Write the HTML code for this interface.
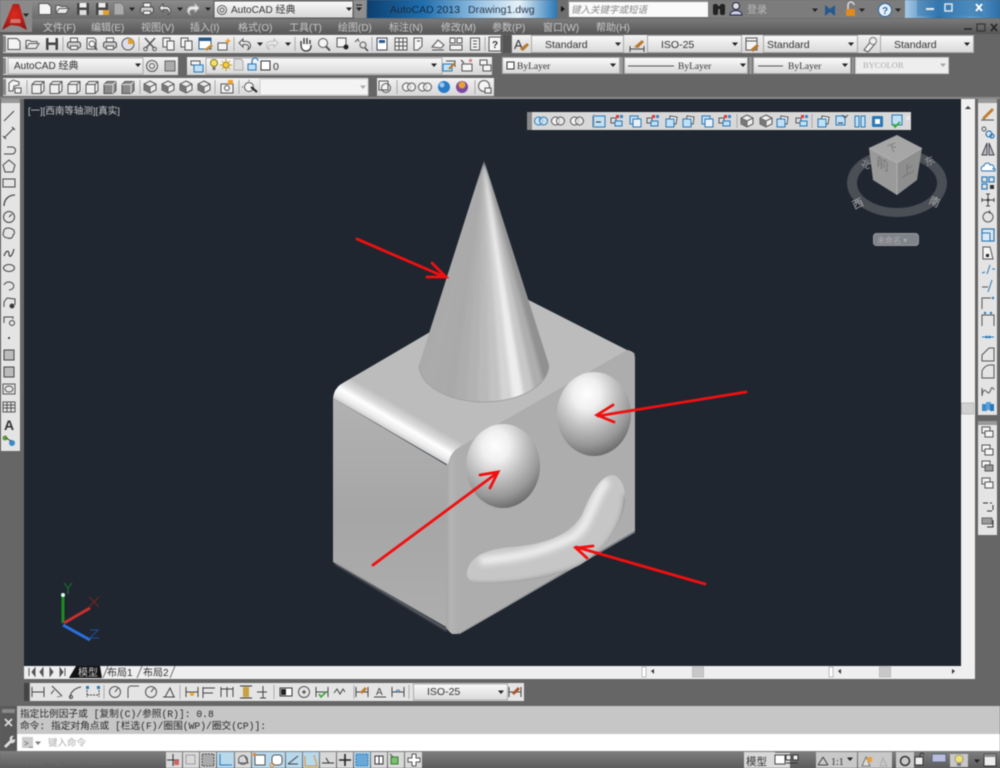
<!DOCTYPE html>
<html><head><meta charset="utf-8"><title>AutoCAD 2013</title>
<style>
html,body{margin:0;padding:0;background:#666;width:1000px;height:768px;overflow:hidden}
svg{display:block;filter:blur(.5px)}
text{font-family:"Liberation Sans","Noto Sans CJK SC",sans-serif}
.m{font-size:10px;fill:#c9c9c9}
.c{font-size:10px;fill:#333}
.mono{font-family:"Liberation Mono","Noto Sans CJK SC",monospace;font-size:9.7px;fill:#2a2a2a}
.ser{font-family:"Liberation Serif","Noto Serif CJK SC",serif;font-size:9.5px;fill:#333}
.i{fill:none;stroke:#555;stroke-width:1}
.w{fill:#f4f4f4;stroke:#555;stroke-width:1}
.b{fill:#bfe0f5;stroke:#2a78b5;stroke-width:1}
.o{fill:#f0a030;stroke:#b06a10;stroke-width:.6}
.bl{fill:none;stroke:#2a78b5;stroke-width:1.2}
</style></head><body>
<svg width="1000" height="768" viewBox="0 0 1000 768" xmlns="http://www.w3.org/2000/svg">
<defs>
<linearGradient id="tb" x1="0" y1="0" x2="0" y2="1"><stop offset="0" stop-color="#f2f2f2"/><stop offset="1" stop-color="#d6d6d6"/></linearGradient>
<linearGradient id="mn" x1="0" y1="0" x2="0" y2="1"><stop offset="0" stop-color="#7a7a7a"/><stop offset="1" stop-color="#565656"/></linearGradient>
<linearGradient id="tt" x1="0" y1="0" x2="0" y2="1"><stop offset="0" stop-color="#8c8c8c"/><stop offset="1" stop-color="#6c6c6c"/></linearGradient>
<linearGradient id="st" x1="0" y1="0" x2="0" y2="1"><stop offset="0" stop-color="#808080"/><stop offset="1" stop-color="#5c5c5c"/></linearGradient>
<linearGradient id="cb" x1="0" y1="0" x2="0" y2="1"><stop offset="0" stop-color="#fafafa"/><stop offset="1" stop-color="#d8d8d8"/></linearGradient>
<linearGradient id="blu" x1="0" y1="0" x2="1" y2="0"><stop offset="0" stop-color="#0d3f6e"/><stop offset=".3" stop-color="#1f6fb0"/><stop offset=".6" stop-color="#9cc6e6"/><stop offset=".8" stop-color="#e6f1f9"/><stop offset="1" stop-color="#2a78b5"/></linearGradient>
<linearGradient id="blu2" x1="0" y1="0" x2="1" y2="0"><stop offset="0" stop-color="#a8cbe6"/><stop offset=".35" stop-color="#2a70ad"/><stop offset=".7" stop-color="#5d9ccb"/><stop offset="1" stop-color="#2c6fa8"/></linearGradient>
<radialGradient id="logo" cx=".5" cy=".4" r=".7"><stop offset="0" stop-color="#e02a20"/><stop offset="1" stop-color="#8a1712"/></radialGradient>
<linearGradient id="leftF" x1="0" y1="0" x2="0" y2="1"><stop offset="0" stop-color="#b2b2b2"/><stop offset=".5" stop-color="#a6a6a6"/><stop offset="1" stop-color="#aeaeae"/></linearGradient>
<linearGradient id="band" gradientUnits="userSpaceOnUse" x1="397.6" y1="405" x2="382.4" y2="431"><stop offset="0" stop-color="#bcbcbc"/><stop offset=".3" stop-color="#dcdcdc"/><stop offset=".5" stop-color="#fff"/><stop offset=".72" stop-color="#ececec"/><stop offset="1" stop-color="#b2b2b2"/></linearGradient>
<linearGradient id="vedge" gradientUnits="userSpaceOnUse" x1="446" y1="0" x2="458" y2="0"><stop offset="0" stop-color="#a6a6a6"/><stop offset=".4" stop-color="#b4b4b4"/><stop offset="1" stop-color="#adadad"/></linearGradient>
<radialGradient id="sph" cx=".4" cy=".26" r=".84"><stop offset="0" stop-color="#fff"/><stop offset=".22" stop-color="#f0f0f0"/><stop offset=".48" stop-color="#c0c0c0"/><stop offset=".72" stop-color="#989898"/><stop offset=".9" stop-color="#6c6c6c"/><stop offset="1" stop-color="#505050"/></radialGradient>
<clipPath id="coneC"><path d="M484 160L419 365A65 37 0 0 0 549 365Z"/></clipPath>
<clipPath id="smC"><path d="M467 572C470 556 485 550 510 547C545 545 570 535 582 515C590 495 600 476 612 475C622 476 626 490 625 502C622 525 605 550 580 565C555 578 510 585 480 583C470 582 466 578 467 572Z"/></clipPath>
<filter id="bl3"><feGaussianBlur stdDeviation="2.5"/></filter>
<filter id="bl1"><feGaussianBlur stdDeviation="1"/></filter>
<filter id="bl15" x="-20%" y="-5%" width="140%" height="110%"><feGaussianBlur stdDeviation="1.6"/></filter>
<filter id="bls" x="-20%" y="-20%" width="140%" height="140%"><feGaussianBlur stdDeviation="3"/></filter>

<path id="tri" d="M-3-1.5h6L0 2z" fill="#222"/>
<g id="doc"><path class="w" d="M-6-5.5h9l3 3v8h-12z"/></g>
<g id="open"><path class="w" d="M-7 4.5v-8h4l1 1h6v2"/><path d="M-7 4.5l3-5h10l-3 5z" fill="#e8e8e8" stroke="#555"/></g>
<g id="save"><rect x="-6" y="-6" width="12" height="12" rx="1" fill="#444"/><rect x="-3.5" y="-6" width="7" height="4.5" fill="#eee"/><rect x="-3.5" y="1" width="7" height="5" fill="#ddd"/></g>
<g id="print"><rect x="-3.5" y="-6" width="7" height="4" class="w"/><rect x="-6.5" y="-2" width="13" height="6" rx="2" fill="#ccc" stroke="#444"/><rect x="-3.5" y="2" width="7" height="3.5" class="w"/></g>
<g id="prev"><path class="w" d="M-5-6h7l2 2v9h-9z"/><circle cx="0" cy="0" r="3" class="i"/><path d="M2 2l3 4" stroke="#444" stroke-width="1.4"/></g>
<g id="cut"><path d="M-5-6L4 4M5-6L-4 4" stroke="#555" stroke-width="1.5"/><circle cx="-4.5" cy="5" r="1.8" class="i"/><circle cx="4.5" cy="5" r="1.8" class="i"/></g>
<g id="copy"><path class="w" d="M-6-6h7v9h-7z"/><path class="w" d="M-2-3h7v9h-7z"/></g>
<g id="zoom"><circle cx="-1" cy="-1" r="4.5" class="w"/><path d="M2 2.5l4 4" stroke="#444" stroke-width="1.8"/></g>
<g id="box"><path d="M-6-2.5l3-3h9v9l-3 3h-9z" fill="#eee" stroke="#555"/><path d="M-6-2.5h9v9M3-2.5l3-3" class="i"/></g>
<g id="boxd"><path d="M-6-2.5l3-3h9v9l-3 3h-9z" fill="#8a8a8a" stroke="#555"/><path d="M-6-2.5h9v9M3-2.5l3-3" fill="none" stroke="#ddd"/></g>
<g id="iso"><path d="M0-6l6 3v6l-6 3-6-3v-6z" fill="#eee" stroke="#555"/><path d="M-6-3l6 3 6-3M0 0v6" class="i"/><path d="M-6-3l6 3v6l-6-3z" fill="#777"/></g>
<g id="undo"><path d="M-6-1l4-4v2.5h3c5 0 6 6 2 8 1.5-3 0-5-2-5h-3v2.5z" fill="#eee" stroke="#555"/></g>
<g id="redo"><path d="M6-1L2-5v2.5h-3c-5 0-6 6-2 8-1.5-3 0-5 2-5h3v2.5z" fill="#eee" stroke="#bbb"/></g>
<g id="circ2"><circle cx="-2.5" cy="0" r="4" class="w"/><circle cx="2.5" cy="0" r="4" class="w" fill-opacity=".6"/></g>
<g id="cblue"><circle cx="-2.5" cy="0" r="4" fill="#cde3f4" stroke="#2a78b5"/><circle cx="2.5" cy="0" r="4" fill="#cde3f4" fill-opacity=".6" stroke="#2a78b5"/><path d="M-1 0a3 3 0 0 1 0-3" stroke="#2a78b5" fill="none"/></g>
<g id="fb"><rect x="-6" y="-5" width="9" height="9" class="b"/><path d="M-4 2h5" stroke="#333"/><path d="M0-6l3 3 3-3" stroke="#555" fill="none"/></g>
<g id="fc"><path d="M-6-3h5v5h-5z" fill="#ddd" stroke="#555"/><path d="M-2 0h7v5h-7z" class="b"/><rect x="-1" y="-6" width="3" height="3" fill="#d33"/><rect x="3" y="-6" width="3" height="3" fill="#38c"/></g>
<g id="fd"><path d="M-5-5h8v8h-8z" class="b"/><path d="M-2-2h8v8h-8z" fill="#e8f2fa" stroke="#2a78b5"/></g>
<g id="fe"><path d="M-2-5l7 1-1 7-7-1z" class="w"/><path d="M-6-2h8v8h-8z" class="b"/></g>
<g id="dl"><path d="M-6-5v10M6-5v10M-6 0H6" stroke="#444" fill="none"/></g>
<g id="dm"><path d="M-5-6l3 3M-2-3l7 7" stroke="#444" fill="none"/><path d="M-6 2l3-4" stroke="#444"/><path d="M0 5l5-1" stroke="#888"/></g>
<g id="dc"><circle cx="0" cy="0" r="5.5" class="i"/><path d="M0 0l3-4" stroke="#444"/></g>
<g id="rc"><path d="M-5 6V-3a3 3 0 0 1 3-3h8" class="i" stroke-width="1.2"/></g>
</defs>

<!-- window bg -->
<rect width="1000" height="768" fill="#666"/>

<!-- title bar -->
<rect width="1000" height="19" fill="url(#tt)"/>
<rect x="0" y="19" width="1000" height="15" fill="url(#mn)"/>
<rect x="367" y="0" width="190" height="18" fill="url(#blu)"/>
<rect x="905" y="0" width="95" height="18" fill="url(#blu2)"/>
<rect x="0" y="0" width="32" height="32" fill="#8a8a8a"/>
<path d="M2 30L13 4h6l8 26-8-4-8-1z" fill="url(#logo)"/>
<path d="M11 19h9l1 4h-11z" fill="#e8c8c0" fill-opacity=".5"/>
<use href="#tri" x="26" y="15" />
<g transform="translate(45 9)"><use href="#doc"/></g>
<g transform="translate(63 9)"><use href="#open"/></g>
<g transform="translate(83 9)"><use href="#save"/></g>
<g transform="translate(102 9)"><use href="#save"/><rect x="1" y="1" width="6" height="5" fill="#e0a030"/></g>
<g transform="translate(120 9)"><path d="M-6-6h7l3 3v9h-10z" fill="#aaa" stroke="#777"/></g>
<use href="#tri" x="132" y="9"/>
<g transform="translate(147 9)"><use href="#print"/></g>
<g transform="translate(165 9)"><use href="#undo"/></g>
<use href="#tri" x="180" y="9"/>
<g transform="translate(193 9)"><use href="#redo"/></g>
<use href="#tri" x="208" y="9"/>
<rect x="214" y="1" width="139" height="17" fill="url(#cb)" stroke="#555"/>
<g transform="translate(222 10)"><circle r="4.5" fill="none" stroke="#555"/><circle r="2" fill="none" stroke="#555"/></g>
<text x="231" y="13" class="c" style="font-size:10px">AutoCAD 经典</text>
<use href="#tri" x="349" y="9"/>
<rect x="354" y="1" width="12" height="17" fill="#8e8e8e"/>
<path d="M356 5h6" stroke="#222"/><use href="#tri" x="359" y="9"/>
<text x="390" y="13" style="font-size:10.5px;fill:#1a2a3a">AutoCAD 2013</text>
<text x="468" y="13" style="font-size:10.5px;fill:#2a3a4a">Drawing1.dwg</text>
<rect x="557" y="0" width="11" height="18" fill="#6e6e6e"/>
<path d="M561 6l4 3-4 3z" fill="#111"/>
<rect x="569" y="2" width="139" height="15" fill="#fafafa"/>
<text x="571" y="13" style="font-size:9.5px;font-style:italic;fill:#888">键入关键字或短语</text>
<rect x="708" y="0" width="197" height="18" fill="#7c7c7c"/>
<g fill="#222"><rect x="713" y="4" width="5" height="11" rx="2"/><rect x="720" y="4" width="5" height="11" rx="2"/><rect x="717" y="6" width="4" height="3"/></g>
<circle cx="736" cy="6" r="3.5" fill="#ddd" stroke="#224"/><path d="M730 15c0-6 12-6 12 0z" fill="#ccd" stroke="#224"/>
<text x="747" y="13" style="font-size:10px;fill:#bbb">登录</text>
<use href="#tri" x="815" y="10"/>
<path d="M825 5l5 4 5-4v11l-5-4-5 4z" fill="#24598f"/>
<rect x="846" y="9" width="9" height="7" fill="#e08a20"/><path d="M848 9V5a3 3 0 0 1 6 0" fill="none" stroke="#ddd" stroke-width="1.5"/>
<use href="#tri" x="862" y="10"/>
<circle cx="885" cy="10" r="6.5" fill="#e8f0f8" stroke="#2a68a8"/><text x="882" y="14" style="font-size:10px;font-weight:bold;fill:#2a68a8">?</text>
<use href="#tri" x="898" y="10"/>
<rect x="917" y="0" width="66" height="16" fill="#3d7bb0" opacity=".55"/>
<rect x="926" y="8" width="8" height="2" fill="#eee"/>
<rect x="945" y="4" width="7" height="7" fill="none" stroke="#eee" stroke-width="1.4"/>
<path d="M976 4l6 7m0-7l-6 7" stroke="#fff" stroke-width="2"/>

<!-- menu -->
<g class="m">
<text class="m" x="43" y="31">文件(F)</text><text class="m" x="91" y="31">编辑(E)</text><text class="m" x="141" y="31">视图(V)</text><text class="m" x="190" y="31">插入(I)</text><text class="m" x="238" y="31">格式(O)</text><text class="m" x="289" y="31">工具(T)</text><text class="m" x="338" y="31">绘图(D)</text><text class="m" x="389" y="31">标注(N)</text><text class="m" x="441" y="31">修改(M)</text><text class="m" x="492" y="31">参数(P)</text><text class="m" x="543" y="31">窗口(W)</text><text class="m" x="596" y="31">帮助(H)</text>
</g>
<rect x="964" y="28" width="8" height="2" fill="#333"/><rect x="977" y="24" width="8" height="7" fill="none" stroke="#333" stroke-width="1.2"/><path d="M991 24l6 7m0-7l-6 7" stroke="#222" stroke-width="1.6"/>

<!-- row 1 -->
<rect x="3" y="35" width="498" height="18" fill="url(#tb)"/>
<rect x="512" y="35" width="462" height="18" fill="url(#tb)"/>
<rect x="3" y="36" width="3" height="16" fill="#888"/>
<g transform="translate(0 44)">
<use href="#doc" x="14"/><use href="#open" x="33"/><use href="#save" x="52"/>
<use href="#print" x="74"/><use href="#prev" x="92"/><use href="#print" x="110"/>
<g transform="translate(128 0)"><circle r="6" fill="#dde" stroke="#555"/><path d="M0 0V-6A6 6 0 0 1 6 0z" fill="#e0a030"/></g>
<use href="#cut" x="150"/><use href="#copy" x="169"/><use href="#copy" x="187"/>
<g transform="translate(205 0)"><rect x="-6" y="-6" width="12" height="11" fill="#fff" stroke="#2a5a8a"/><rect x="-6" y="-6" width="12" height="3" fill="#2a5a8a"/><path d="M0 5l6-5 2 2-6 5z" fill="#c88a30"/></g>
<g transform="translate(224 0)"><rect x="-6" y="-1" width="9" height="7" class="w"/><path d="M4-6l1 2 2 1-2 1-1 2-1-2-2-1 2-1z" fill="#f0a030"/></g>
<use href="#undo" x="245"/><use href="#tri" x="260"/><use href="#redo" x="272"/><use href="#tri" x="288"/>
<g transform="translate(306 0)"><path d="M-5 1V-3M-2 0V-6M1 0V-6M4 0V-4M-5 0c0 6 3 7 5 7 4 0 5-3 5-6" fill="#fff" stroke="#333" stroke-width="1.3"/></g>
<use href="#zoom" x="324"/>
<g transform="translate(343 0)"><rect x="-6" y="-6" width="9" height="9" class="w"/><circle cx="3" cy="3" r="2.5" fill="#222"/></g>
<g transform="translate(361 0)"><circle cx="2" cy="1" r="3" class="i"/><path d="M-6-2l3-3 1 3" class="i"/><path d="M4 4l3 3" stroke="#444" stroke-width="1.5"/></g>
<g transform="translate(382 0)"><rect x="-5" y="-6" width="10" height="12" fill="#fff" stroke="#445"/><rect x="-3" y="-4" width="6" height="3" fill="#2a5a8a"/></g>
<g transform="translate(401 0)"><rect x="-6" y="-6" width="12" height="12" class="w"/><path d="M-6-2H6M-6 2H6M-2-6V6M2-6V6" class="i"/></g>
<g transform="translate(418 0)"><path d="M-4-6h8v8l-4 4h-4z" class="w"/><path d="M-1-3h3" stroke="#555"/></g>
<g transform="translate(438 0)"><path d="M-6 3l6-7 6 5-3 3z" class="w"/><path d="M-6 6H6" stroke="#555"/></g>
<g transform="translate(456 0)"><rect x="-6" y="-6" width="5" height="5" class="w"/><rect x="1" y="-6" width="5" height="5" class="w"/><rect x="-6" y="1" width="12" height="5" class="w"/></g>
<g transform="translate(475 0)"><rect x="-4.5" y="-6" width="9" height="12" class="w"/><path d="M-2-3h4M-2 0h4M-2 3h4" class="i"/></g>
<rect x="489" y="-7" width="12" height="14" fill="#f4f4f4" stroke="#555"/><text x="492" y="4" style="font-size:10px;font-weight:bold;fill:#333">?</text>
</g>
<g stroke="#a8a8a8"><path d="M63 37v14M139 37v14M234 37v14M295 37v14M372 37v14M485 37v14"/></g>
<rect x="503" y="35" width="8" height="18" fill="#555"/>
<g transform="translate(521 44)"><text x="-7" y="5" style="font-size:13px;fill:#333">A</text><path d="M-1 5l7-6 2 2-6 6z" fill="#b8762a"/></g>
<g transform="translate(637 44)"><path d="M-7 5h14M-7 2v6M7 2v6" stroke="#444" fill="none"/><path d="M-3 3l8-7 2 2-6 6z" fill="#b8762a"/></g>
<g transform="translate(752 44)"><rect x="-6" y="-6" width="11" height="12" class="w"/><path d="M-6-3H5" stroke="#555"/><path d="M-1 5l6-5 2 2-6 6z" fill="#b8762a"/></g>
<g transform="translate(870 44)"><path d="M-6 6l7-9 4 3-7 8z" class="w"/><circle cx="3" cy="-3" r="3.5" fill="#eee" stroke="#777"/></g>
<g fill="url(#cb)" stroke="#a8a8a8"><rect x="531.500" y="35.500" width="92" height="17"/><rect x="647.500" y="35.500" width="94" height="17"/><rect x="763.500" y="35.500" width="94" height="17"/><rect x="880.500" y="35.500" width="93" height="17"/></g>
<g style="font-size:10.500px;fill:#333"><text x="545" y="48" style="font-size:10.500px;fill:#333">Standard</text><text x="661" y="48" style="font-size:10.500px;fill:#333">ISO-25</text><text x="767" y="48" style="font-size:10.500px;fill:#333">Standard</text><text x="894" y="48" style="font-size:10.500px;fill:#333">Standard</text></g>
<use href="#tri" x="618" y="44"/><use href="#tri" x="735" y="44"/><use href="#tri" x="851" y="44"/><use href="#tri" x="967" y="44"/>

<!-- row 2 -->
<rect x="3" y="57" width="175" height="18" fill="url(#tb)"/>
<rect x="187" y="57" width="305" height="18" fill="url(#tb)"/>
<rect x="3" y="58" width="3" height="16" fill="#888"/>
<rect x="8" y="58" width="135" height="16" fill="url(#cb)" stroke="#aaa"/>
<text x="14" y="69" style="font-size:10px;fill:#333">AutoCAD 经典</text>
<use href="#tri" x="138" y="65"/>
<g transform="translate(152 66)"><circle r="5.500" class="i"/><circle r="2.500" class="i"/></g>
<g transform="translate(170 66)"><rect x="-5" y="-5" width="10" height="10" fill="#aaa" stroke="#666"/></g>
<g transform="translate(197 66)"><rect x="-6" y="-5" width="9" height="4" class="w"/><rect x="-3" y="-1" width="9" height="7" class="b"/></g>
<rect x="206" y="58" width="236" height="16" fill="url(#cb)" stroke="#aaa"/>
<g transform="translate(214 65)"><circle cy="-2" r="3.500" fill="#f4e070" stroke="#8a7a20"/><rect x="-1.500" y="2" width="3" height="3" fill="#777"/></g>
<g transform="translate(226 65)"><circle r="3" fill="#f4d040" stroke="#a07a10"/><path d="M-6 0h2M4 0h2M0-6v2M0 4v2M-4-4l1 1M3 3l1 1M4-4l-1 1M-3 3l-1 1" stroke="#c09020"/></g>
<g transform="translate(238 65)"><path d="M-4-6h7l2 2v9h-9z" fill="#ddd" stroke="#aaa"/></g>
<g transform="translate(253 65)"><rect x="-5" y="-1" width="8" height="6" class="b"/><path d="M-1-1v-3a3 3 0 0 1 6 0" class="bl"/></g>
<rect x="261" y="61" width="9" height="9" fill="#fff" stroke="#333"/>
<text x="273" y="70" style="font-size:10.500px;fill:#333">0</text>
<use href="#tri" x="434" y="65"/>
<g transform="translate(449 66)"><rect x="-6" y="-2" width="9" height="7" class="b"/><path d="M-3-5h9v6" stroke="#555" fill="none"/><path d="M0 3l6-6" stroke="#b8762a" stroke-width="2"/></g>
<g transform="translate(467 66)"><rect x="-5" y="-2" width="10" height="7" class="w"/><path d="M-6-6l3 3" stroke="#333"/><rect x="2" y="-7" width="3" height="3" fill="#d88"/></g>
<g transform="translate(485 66)"><rect x="-5" y="-6" width="7" height="5" class="w"/><rect x="-2" y="-1" width="8" height="6" class="w"/></g>

<g fill="url(#cb)" stroke="#aaa"><rect x="502.500" y="57.500" width="117" height="16"/><rect x="624.500" y="57.500" width="123" height="16"/><rect x="753.500" y="57.500" width="97" height="16"/></g>
<rect x="855.500" y="57.500" width="93" height="16" fill="#eee" stroke="#ccc"/>
<g fill="#999"><rect x="620" y="57" width="3" height="17"/><rect x="749" y="57" width="3" height="17"/><rect x="852" y="57" width="2" height="17"/></g>
<rect x="507" y="62" width="7" height="7" fill="#fff" stroke="#333"/>
<text x="517" y="69" class="ser">ByLayer</text>
<path d="M628 66h46M758 66h25" stroke="#555"/>
<text x="678" y="69" class="ser">ByLayer</text><text x="788" y="69" class="ser">ByLayer</text>
<text x="863" y="68" class="ser" style="fill:#aaa;font-size:8.500px">BYCOLOR</text>
<use href="#tri" x="613" y="65"/><use href="#tri" x="743" y="65"/><use href="#tri" x="845" y="65"/><use href="#tri" x="943" y="65" style="opacity:.35"/>

<!-- row 3 -->
<rect x="3" y="78" width="365" height="18" fill="url(#tb)"/>
<rect x="377" y="78" width="117" height="18" fill="url(#tb)"/>
<rect x="3" y="79" width="3" height="16" fill="#888"/>
<g transform="translate(0 87)">
<g transform="translate(15 0)"><path d="M-6-4l4-3 6 2v3l-5 1-1 5h-4z" class="w"/><rect x="0" y="1" width="6" height="5" class="w"/></g>
<use href="#box" x="38"/><use href="#box" x="56"/><use href="#box" x="74"/><use href="#box" x="92"/><use href="#boxd" x="110"/><use href="#boxd" x="128"/>
<use href="#iso" x="150"/><use href="#iso" x="168"/><use href="#iso" x="186"/><use href="#iso" x="204"/>
<g transform="translate(227 0)"><rect x="-6" y="-3" width="12" height="9" class="w"/><circle cy="1" r="2.500" class="i"/><rect x="1" y="-7" width="5" height="4" fill="#f0a030"/></g>
<g transform="translate(250 0)"><circle cx="-1" r="4.500" class="w"/><path d="M-1-6v-1M-7 0h-1" stroke="#444"/><path d="M1 0l6 5" stroke="#222" stroke-width="2"/></g>
<g transform="translate(385 0)"><rect x="-6" y="-6" width="9" height="9" class="w"/><circle cx="1" cy="1" r="4.500" class="i"/></g>
<use href="#circ2" x="409" transform="translate(0 0)"/>
<use href="#circ2" x="425"/>
<circle cx="444" cy="0" r="6" fill="#2a7cc8"/><circle cx="442" cy="-2" r="2.500" fill="#9cc8f0"/>
<circle cx="462" cy="0" r="6" fill="#7a4aa0"/><circle cx="462" cy="-2" r="3.500" fill="#e8a030"/>
<g transform="translate(485 0)"><circle cx="-1" cy="-1" r="5.500" class="w"/><rect x="0" y="1" width="6" height="5" class="w"/></g>
</g>
<g stroke="#a8a8a8"><path d="M27 80v14M140 80v14M215 80v14M239 80v14M397 80v14M475 80v14"/></g>
<rect x="260" y="79" width="108" height="16" fill="#f4f4f4" stroke="#ccc"/>
<use href="#tri" x="363" y="87" style="opacity:.35"/>

<!-- canvas -->
<rect x="24" y="99" width="937" height="567" fill="#1f2630"/>
<rect x="0" y="97" width="1000" height="2" fill="#8a8a8a"/>
<text x="28" y="114" style="font-size:9.500px;fill:#c8c8c8">[一][西南等轴测][真实]</text>

<!-- model -->
<path d="M343 383L505 288L627 350Q632 351 635 354L458 450Z" fill="#bcbcbc"/>
<path d="M333 398L448 466V628L333 562Z" fill="url(#leftF)"/>
<path d="M448 466Q449 452 458 447L627 350Q635 351 635 358V531L460 633Q452 636 448 630Z" fill="#adadad"/>
<path d="M446 466L458 448V634L452 634L446 628Z" fill="url(#vedge)"/>
<path d="M333 398Q334 391 337 388Q339 385 343 383L361 372.500L476 437.500L458 448Q450 453 448 465Z" fill="url(#band)"/>
<path d="M335 563L447 630" stroke="#909090" stroke-width="1.500" fill="none" filter="url(#bl1)"/>
<path d="M459 634L635 532" stroke="#9a9a9a" stroke-width="1" fill="none"/>
<!-- cone -->
<g clip-path="url(#coneC)"><g filter="url(#bl15)">
<path d="M484 161L380 406H418.500Z" fill="#aaaaaa"/>
<path d="M484 161L418.500 406H430.500Z" fill="#ababab" stroke="#ababab" stroke-width=".5"/>
<path d="M484 161L430.500 406H442.400Z" fill="#aaaaaa" stroke="#aaaaaa" stroke-width=".5"/>
<path d="M484 161L442.400 406H454.300Z" fill="#a9a9a9" stroke="#a9a9a9" stroke-width=".5"/>
<path d="M484 161L454.300 406H466.200Z" fill="#adadad" stroke="#adadad" stroke-width=".5"/>
<path d="M484 161L466.200 406H478Z" fill="#b2b2b2" stroke="#b2b2b2" stroke-width=".5"/>
<path d="M484 161L478 406H490Z" fill="#b9b9b9" stroke="#b9b9b9" stroke-width=".5"/>
<path d="M484 161L490 406H501.800Z" fill="#c2c2c2" stroke="#c2c2c2" stroke-width=".5"/>
<path d="M484 161L501.800 406H513.700Z" fill="#d4d4d4" stroke="#d4d4d4" stroke-width=".5"/>
<path d="M484 161L513.700 406H525.600Z" fill="#ededed" stroke="#ededed" stroke-width=".5"/>
<path d="M484 161L525.600 406H537.500Z" fill="#c8c8c8" stroke="#c8c8c8" stroke-width=".5"/>
<path d="M484 161L537.500 406H549.500Z" fill="#aeaeae" stroke="#aeaeae" stroke-width=".5"/>
<path d="M484 161L549.500 406H600Z" fill="#909090"/>
</g></g>
<path d="M419 365A65 37 0 0 0 549 365" fill="none" stroke="#a2a2a2" stroke-width="1"/>
<!-- spheres -->
<ellipse cx="503" cy="466" rx="37" ry="42" fill="url(#sph)"/>
<ellipse cx="594" cy="414" rx="37" ry="42" fill="url(#sph)"/>
<!-- smile -->
<g clip-path="url(#smC)">
<rect x="460" y="470" width="170" height="120" fill="#c6c6c6"/>
<path d="M462 590C500 594 560 587 592 567C612 552 632 527 632 495" stroke="#5e5e5e" stroke-width="13" fill="none" filter="url(#bls)"/>
<path d="M480 561C500 558 530 558 573 537C590 525 590 505 607 480" stroke="#ececec" stroke-width="9" fill="none" filter="url(#bls)"/>
</g>

<!-- arrows -->
<g stroke="#f01010" stroke-width="2.800" fill="none" stroke-linecap="round">
<path d="M357 239L445 277M432 263L446 277L427 277"/>
<path d="M746 392L598 416M613 405L597 415L614 422"/>
<path d="M373 565L497 473M480 475L498 472L490 488"/>
<path d="M705 584L576 547M593 546L576 548L587 558"/>
</g>

<!-- floating toolbar -->
<rect x="527" y="112" width="384" height="18" fill="#d8d8d8"/>
<rect x="527" y="112" width="5" height="18" fill="#888"/>
<g transform="translate(0 121)">
<use href="#cblue" x="541"/><use href="#circ2" x="558"/><use href="#circ2" x="577"/>
<g transform="translate(599 0)"><rect x="-6" y="-5" width="12" height="11" class="b"/><path d="M-3 1h5" stroke="#333"/></g>
<use href="#fc" x="617"/><use href="#fd" x="635"/><use href="#fc" x="653"/><use href="#fe" x="672"/><use href="#fe" x="689"/><use href="#fd" x="707"/><use href="#fc" x="725"/>
<use href="#iso" x="747"/><use href="#iso" x="766"/><use href="#fe" x="783"/><use href="#fc" x="802"/>
<use href="#fe" x="824"/><use href="#fb" x="842"/><g transform="translate(860 0)"><rect x="-5" y="-5" width="4" height="11" class="b"/><rect x="1" y="-5" width="4" height="11" class="b"/></g>
<g transform="translate(878 0)"><rect x="-6" y="-5" width="11" height="11" rx="1" fill="#2a78b5"/><rect x="-3" y="-2" width="5" height="5" fill="#fff"/></g>
<g transform="translate(897 0)"><rect x="-5" y="-6" width="10" height="10" class="b"/><path d="M-4 3l2 3 5-5" stroke="#3a3" stroke-width="1.800" fill="none"/></g>
</g>
<path d="M594 114v14M737 114v14M812 114v14" stroke="#a8a8a8"/>
<path d="M906 116l4 4m0-4l-4 4" stroke="#eee" stroke-width="1.200"/>

<!-- nav cube -->
<path fill-rule="evenodd" d="M847 183a50 34 0 1 0 100 0a50 34 0 1 0-100 0zM857 183a40 25 0 1 0 80 0a40 25 0 1 0-80 0z" fill="#4a4f56"/>
<path d="M869 148L897 135L922 148L897 163Z" fill="#a6a6a6"/>
<path d="M869 148L897 163V195L873 180Z" fill="#9a9a9a"/>
<path d="M897 163L922 148L917 180L897 195Z" fill="#8e8e8e"/>
<path d="M869 148L897 163L922 148M897 163V195" stroke="#bbb" stroke-width=".7" fill="none"/>
<text transform="translate(889 153) rotate(-20)" style="font-size:10px;fill:#777">下</text>
<text transform="translate(876 165) skewY(28)" style="font-size:13px;fill:#777">前</text>
<text transform="translate(901 178) skewY(-28)" style="font-size:13px;fill:#777">上</text>
<text transform="translate(860 165) rotate(25)" style="font-size:10px;fill:#999">北</text>
<text transform="translate(924 161) rotate(-25) translate(0 6)" style="font-size:10px;fill:#999">东</text>
<text transform="translate(852 204) rotate(-25) translate(0 6)" style="font-size:11px;fill:#aaa">西</text>
<text transform="translate(928 203) rotate(25)" style="font-size:11px;fill:#aaa">南</text>
<rect x="873.500" y="233.500" width="45" height="12" rx="3" fill="#7f838a" stroke="#999"/>
<text x="877" y="243" style="font-size:8px;fill:#aaa">未命名 ▾</text>

<!-- UCS -->
<path d="M63 623V596" stroke="#1f8a1f" stroke-width="3"/>
<circle cx="63" cy="595" r="2" fill="#dfe"/>
<path d="M64 623L90 608" stroke="#c83030" stroke-width="3"/>
<path d="M63 625L90 640" stroke="#2a70e0" stroke-width="3"/>
<path d="M64 583l4 5 4-5M68 588v6" stroke="#1d7a2c" fill="none"/>
<path d="M89 597l10 10m0-10l-10 10" stroke="#7a2424" fill="none"/>
<path d="M90 630h8l-8 8h9" stroke="#1f4fa0" fill="none"/>

<!-- scroll v -->
<rect x="961" y="99" width="14" height="567" fill="#f0f0f0"/>
<path d="M965 109l3-3 3 3z" fill="#333"/>
<rect x="961.500" y="403" width="12" height="11" fill="#d0d0d0" stroke="#bbb"/>

<!-- tabs -->
<rect x="24" y="666" width="951" height="13" fill="#efefef"/>
<g fill="#555"><path d="M29 668v8M35 668l-3 4 3 4zM43 668l-3 4 3 4zM50 668l3 4-3 4zM60 668l3 4-3 4zM65 668v8" stroke="#555"/></g>
<path d="M69 678L76 666H100L102 678Z" fill="#111"/>
<text x="78" y="676" style="font-size:10px;fill:#ccc">模型</text>
<text x="107" y="676" style="font-size:10px;fill:#333">布局1</text>
<text x="143" y="676" style="font-size:10px;fill:#333">布局2</text>
<path d="M103 678L108 666M137 678L142 666M170 678L175 666" stroke="#777" fill="none"/>
<rect x="642" y="667" width="4" height="10" fill="#fff" stroke="#bbb"/><path d="M651 671l3-2v5z" fill="#333"/>
<rect x="692.500" y="667" width="11" height="10" fill="#c8c8c8" stroke="#bbb"/>
<rect x="829" y="667" width="4" height="10" fill="#fff" stroke="#bbb"/><path d="M838 671l3-2v5z" fill="#333"/>
<rect x="879.500" y="667" width="11" height="10" fill="#c8c8c8" stroke="#bbb"/>
<path d="M952 669l3 2-3 3z" fill="#333"/>

<!-- left toolbar -->
<rect x="1" y="103" width="19" height="348" fill="#e4e4e4"/>
<rect x="1" y="99" width="19" height="4" fill="#999"/>
<g transform="translate(9 0)" fill="none" stroke="#444" stroke-width="1">
<path d="M-5 121L5 111"/><path d="M-5 138L5 128"/><path d="M-6 136l3 3M3 127l3 3"/>
<path d="M-5 154H3a3.500 3.500 0 0 0 0-7H-2"/>
<path d="M0 160L6 165 4 172H-4L-6 165Z"/>
<rect x="-6" y="179" width="12" height="8"/>
<path d="M-5 206C-5 199 0 195 6 195" stroke-width="1.300"/>
<circle cy="217" r="5.500"/><path d="M0 217L3 214"/>
<path d="M-5 230c2-3 6-2 8-1 3 1 3 5 1 6 0 3-3 4-5 3-3 0-5-2-5-4z"/>
<path d="M-5 256c2-6 5-6 5-2s3 3 5-5" stroke-width="1.200"/>
<ellipse cy="268" rx="5.500" ry="3.500"/>
<path d="M-5 285a5 4 0 1 1 5 5"/>
<path d="M-5 307v-5l3-4 8 1v6" /><circle cx="3" cy="306" r="2" fill="#333"/>
<path d="M-5 323v-6h9v2"/><circle cx="3" cy="323" r="2.500"/>
</g>
<circle cx="9" cy="338" r="1" fill="#222"/>
<g transform="translate(9 355)"><rect x="-5" y="-5" width="10" height="10" fill="#bbb" stroke="#444"/></g>
<g transform="translate(9 372)"><rect x="-5" y="-5" width="10" height="10" fill="#bbb" stroke="#444"/></g>
<g transform="translate(9 389)"><rect x="-6" y="-5" width="12" height="10" fill="none" stroke="#555"/><ellipse rx="4" ry="3" fill="none" stroke="#555"/></g>
<g transform="translate(9 407)" fill="none" stroke="#555"><rect x="-6" y="-5" width="12" height="10"/><path d="M-6-2H6M-6 1H6M-2-5V5M2-5V5"/></g>
<text x="4" y="430" style="font-size:14px;font-weight:bold;fill:#333">A</text>
<circle cx="5" cy="438" r="2.500" fill="#5a9a3a"/><circle cx="12" cy="443" r="3" fill="#3a8ac8"/><path d="M6 438l5 3" stroke="#333"/>

<!-- right toolbar -->
<rect x="978" y="103" width="19" height="312" fill="#e4e4e4"/>
<rect x="978" y="99" width="19" height="4" fill="#999"/>
<rect x="978" y="425" width="19" height="110" fill="#e4e4e4"/>
<rect x="978" y="421" width="19" height="4" fill="#999"/>
<g transform="translate(988 0)">
<path d="M-6 118L4 108l2 2L-4 120z" fill="#c07a30"/><path d="M-7 120H6" stroke="#555"/>
<g transform="translate(0 132)"><circle cx="-4" cy="-3" r="2" class="i"/><circle cx="1" cy="2" r="3" class="bl"/><circle cx="4" cy="4" r="2" class="bl"/></g>
<path d="M-1 143V155H-6ZM1 143V155H6Z" fill="#bbb" stroke="#445"/>
<path d="M-6 171c-2-3 0-5 2-5 0-3 5-4 6-1 3-1 5 2 3 4h2v2z" fill="#fff" stroke="#2a78b5"/>
<g class="bl"><rect x="-6" y="177" width="5" height="5"/><rect x="1" y="177" width="5" height="5"/><rect x="-6" y="184" width="5" height="5"/></g><rect x="2" y="185" width="4" height="4" fill="#333"/>
<path d="M-6 200H6M0 194V206" stroke="#444"/><path d="M-6 198v4M6 198v4M-2 194h4M-2 206h4" stroke="#444"/><circle cy="200" r="1.500" fill="#444"/>
<circle cy="217" r="5" class="i"/><path d="M0 212l2-2v4z" fill="#444"/>
<rect x="-6" y="229" width="12" height="12" class="bl" fill="none"/><rect x="-6" y="233" width="8" height="8" fill="#d8e8f4" stroke="#2a78b5"/>
<path d="M-5 247h7l3 12H-5z" class="w"/><rect x="-2" y="254" width="3" height="3" fill="#222"/>
<path d="M-6 273l3-1M-1 271h0M2 265l-3 9M4 269h3" stroke="#2a78b5" fill="none"/>
<path d="M-6 287H0" class="i"/><path d="M0 292l4-12" stroke="#2a78b5"/>
<path d="M-6 309V298H3" class="i"/><circle cx="5" cy="298" r="1.200" fill="#2a78b5"/>
<path d="M-6 326V315H6V326" class="i"/><circle cx="-3" cy="313" r="1.200" fill="#2a78b5"/><circle cx="3" cy="313" r="1.200" fill="#2a78b5"/>
<path d="M-6 337H6" stroke="#2a78b5"/><circle cx="-1.500" cy="337" r="1.300" fill="#2a78b5"/><circle cx="1.500" cy="337" r="1.300" fill="#2a78b5"/>
<path d="M-6 361v-6l7-7h5v13z" class="i"/>
<path d="M-6 378v-6c0-3 4-7 8-7h4v13z" class="i"/>
<path d="M-6 396c1-8 3-6 5-4s3 0 4-3 3 0 3 1" class="i" stroke-width="1.200"/><path d="M-6 388v8" stroke="#555"/>
<g transform="translate(0 407)"><rect x="-6" y="-3" width="5" height="7" fill="#3a8ac8"/><rect x="-2" y="-5" width="5" height="8" fill="#5aa0d8"/><rect x="2" y="-3" width="4" height="7" fill="#2a78b5"/></g>
<g class="w"><rect x="-6" y="427" width="8" height="6"/><rect x="-3" y="431" width="8" height="6"/>
<rect x="-6" y="445" width="8" height="6"/><rect x="-3" y="449" width="8" height="6"/>
<rect x="-6" y="461" width="8" height="6"/><rect x="-3" y="465" width="8" height="6" fill="#999"/>
<rect x="-6" y="478" width="8" height="6"/><rect x="-3" y="482" width="8" height="6"/></g>
<path d="M-5 503h5M2 503h2M5 505v5M-1 511h5" stroke="#333"/>
<rect x="-6" y="518" width="10" height="6" fill="#999" stroke="#666"/><path d="M5 520v7h-6" stroke="#333" fill="none"/>
</g>

<!-- dim toolbar -->
<rect x="24" y="683" width="5" height="18" fill="#444"/>
<rect x="30" y="683" width="494" height="18" fill="#e4e4e4"/>
<g transform="translate(0 692)">
<use href="#dl" x="38"/><use href="#dm" x="57"/>
<path d="M70 6C70 0 75-4 81-5" stroke="#444" fill="none"/><circle cx="71" cy="5" r="1.500" fill="none" stroke="#444"/>
<g transform="translate(93 0)"><path d="M-6-5v10M6-5v10M-6 3H6" stroke="#444" stroke-dasharray="2 1" fill="none"/><rect x="-7" y="-6" width="3" height="3" fill="#2a78b5"/><rect x="4" y="-6" width="3" height="3" fill="#2a78b5"/></g>
<use href="#dc" x="115"/><use href="#rc" x="133"/><use href="#dc" x="151"/>
<path d="M163 5H175M165 5L170-4l4 9" stroke="#444" fill="none"/>
<g transform="translate(192 0)"><use href="#dl"/><circle cy="2" r="2" fill="#f0a030"/></g>
<g transform="translate(209 0)"><path d="M-6-5V6M-6-4H6M-6 1H4" stroke="#444" fill="none"/></g>
<g transform="translate(227 0)"><path d="M-6-5v10M0-5v10M6-5v10M-6-3H6" stroke="#444" fill="none"/></g>
<g transform="translate(246 0)"><path d="M-6-6H6M-6 6H6" stroke="#333"/><rect x="-3" y="-5" width="6" height="10" fill="#c8a040"/></g>
<g transform="translate(263 0)"><path d="M-6 0h10M0-6V6M-3 6H3" stroke="#444" fill="none"/></g>
<g transform="translate(286 0)"><rect x="-6" y="-4" width="12" height="8" fill="#fff" stroke="#333"/><path d="M-5-3h5v6h-5z" fill="#222"/></g>
<g transform="translate(304 0)"><circle r="5.500" class="i"/><path d="M-2 0h4M0-2v4" stroke="#333"/></g>
<g transform="translate(322 0)"><use href="#dl"/><path d="M-3 2l2 3 5-5" stroke="#3a3" stroke-width="1.600" fill="none"/></g>
<path d="M334 1l3-4 3 5 3-5 2 3" stroke="#444" fill="none"/>
<g transform="translate(362 0)"><use href="#dl"/><path d="M-2 0l5-5 2 2-5 5z" fill="#c07a30"/></g>
<g transform="translate(380 0)"><path d="M-6 5H6" stroke="#444"/><text x="-4" y="3" style="font-size:10px;fill:#444">A</text></g>
<g transform="translate(398 0)"><use href="#dl"/><path d="M-2 0a2 2 0 1 1 4 0" stroke="#2a78b5" fill="none"/></g>
</g>
<path d="M104 685v14M180 685v14M274 685v14M354 685v14M409 685v14" stroke="#aaa"/>
<rect x="413.500" y="684" width="94" height="16" fill="url(#cb)" stroke="#aaa"/>
<text x="427" y="695" style="font-size:10.500px;fill:#333">ISO-25</text>
<use href="#tri" x="501" y="692"/>
<g transform="translate(515 692)"><use href="#dl"/><path d="M-3 1l6-6 2 2-6 6z" fill="#a8552a"/></g>

<!-- command -->
<rect x="0" y="706" width="1000" height="28" fill="#c6c6c6"/>
<rect x="0" y="706" width="17" height="46" fill="#5a5a5a"/>
<rect x="2" y="709" width="13" height="4" fill="#888"/>
<path d="M5 719l7 7m0-7l-7 7" stroke="#ddd" stroke-width="1.800"/>
<path d="M4 746l6-6c-1-3 1-5 4-4l-2 2 1 2 2-1c1 3-2 5-4 4l-5 5z" fill="#ddd"/>
<text x="20" y="717" class="mono">指定比例因子或 [复制(C)/参照(R)]: 0.8</text>
<text x="20" y="729" class="mono">命令: 指定对角点或 [栏选(F)/圈围(WP)/圈交(CP)]:</text>
<rect x="17" y="734" width="983" height="17" fill="#fff"/>
<rect x="22" y="737" width="11" height="11" fill="#ccc"/><text x="24" y="746" style="font-size:8px;fill:#555">&gt;_</text>
<use href="#tri" x="38" y="743" style="opacity:.6"/>
<text x="48" y="746" style="font-size:9.500px;fill:#aaa">键入命令</text>

<!-- status -->
<rect x="0" y="751" width="1000" height="17" fill="url(#st)"/>
<text x="8" y="765" style="font-size:8.500px;fill:#6e6e6e">809.9114, -52.1995 , 0.0000</text>
<g fill="#d8d8d8"><rect x="166" y="752" width="16" height="16"/><rect x="183" y="752" width="16" height="16"/><rect x="200" y="752" width="16" height="16"/><rect x="235" y="752" width="16" height="16"/></g>
<g fill="#b8d8ec"><rect x="217" y="752" width="17" height="16"/><rect x="252" y="752" width="17" height="16"/><rect x="269" y="752" width="16" height="16"/><rect x="286" y="752" width="16" height="16"/><rect x="303" y="752" width="16" height="16"/><rect x="354" y="752" width="16" height="16"/></g>
<g fill="#d8d8d8"><rect x="320" y="752" width="16" height="16"/><rect x="337" y="752" width="16" height="16"/><rect x="371" y="752" width="16" height="16"/><rect x="388" y="752" width="16" height="16"/><rect x="405" y="752" width="17" height="16"/></g>
<g transform="translate(0 760)">
<path d="M167 0h12M173-6V6" stroke="#333"/><rect x="174" y="0" width="5" height="5" fill="#c66"/>
<rect x="186" y="-5" width="9" height="9" fill="none" stroke="#666" stroke-dasharray="1 1"/>
<rect x="202" y="-6" width="12" height="12" fill="#aaa" stroke="#444" stroke-dasharray="2 1"/>
<path d="M220-6V5H232" stroke="#2a78b5" fill="none"/>
<circle cx="243" r="4.500" fill="none" stroke="#555"/><path d="M238 3H248L245-4" stroke="#555" fill="none"/>
<rect x="255" y="-5" width="10" height="10" fill="#fff" stroke="#555"/><rect x="253" y="-7" width="3" height="3" fill="#e08a30"/>
<rect x="272" y="-5" width="10" height="10" rx="3" fill="#fff" stroke="#555"/><circle cx="272" cy="5" r="2" fill="none" stroke="#e08a30"/>
<path d="M288 4L298-4M288 4H298" stroke="#444" fill="none"/>
<path d="M305 6V-4M305 6H317L314-5" stroke="#e0902a" fill="none"/>
<path d="M322 3H334M326-2l3 5" stroke="#333"/>
<path d="M339 0H351M345-6V6" stroke="#222" stroke-width="1.600"/>
<rect x="356" y="-6" width="12" height="12" fill="#6aa8d8" stroke="#2a78b5" stroke-dasharray="2 1"/>
<rect x="375" y="-4" width="8" height="8" fill="#fff" stroke="#333"/><path d="M379-4V4" stroke="#333"/>
<rect x="391" y="-3" width="7" height="7" fill="#7ac070" stroke="#3a7a30"/><path d="M390-6l3 3" stroke="#555"/>
<path d="M408-2h4v-4h4v4h4v4h-4v4h-4V2h-4z" fill="#fff" stroke="#555"/>
</g>
<rect x="744" y="752" width="31" height="16" fill="#d8d8d8"/>
<text x="746" y="765" style="font-size:10.500px;fill:#333">模型</text>
<rect x="770" y="753" width="20" height="15" fill="#d8d8d8"/>
<rect x="775" y="755" width="10" height="9" fill="#fff" stroke="#444"/>
<rect x="786" y="755" width="5" height="5" fill="#eee" stroke="#333"/><rect x="793" y="755" width="5" height="5" fill="#eee" stroke="#333"/><path d="M786 763h12" stroke="#333"/>
<rect x="816" y="752" width="41" height="16" fill="#c8c8c8"/>
<path d="M823 757l-5 8M823 757l5 8M818 765h10" stroke="#444" fill="none"/>
<text x="831" y="765" style="font-size:10px;fill:#333;font-family:'Liberation Serif',serif">1:1</text>
<use href="#tri" x="850" y="759"/>
<rect x="858" y="752" width="34" height="16" fill="#c8c8c8"/>
<path d="M862 766l4-9 4 9z" fill="#ddd" stroke="#777"/><rect x="867" y="757" width="5" height="5" fill="#e8a040"/>
<path d="M880 766l3-8 4 8z" fill="none" stroke="#aaa"/>
<rect x="896" y="752" width="18" height="16" fill="#c8c8c8"/>
<circle cx="905" cy="761" r="4.500" fill="none" stroke="#333" stroke-width="1.500"/>
<rect x="915" y="757" width="8" height="8" fill="#eee" stroke="#333"/><path d="M920 757v-2a2 2 0 0 1 4 0" stroke="#333" fill="none"/>
<rect x="932" y="754" width="14" height="8" fill="#bbd" stroke="#567"/>
<rect x="950" y="754" width="18" height="13" fill="#c8c8c8"/>
<circle cx="959" cy="759" r="4" fill="#f0e070" stroke="#998"/><rect x="957" y="763" width="4" height="3" fill="#777"/>
<use href="#tri" x="977" y="761"/>
<rect x="984" y="754" width="12" height="12" fill="#eee" stroke="#333"/><rect x="984" y="754" width="12" height="3" fill="#888"/>
</svg>
</body></html>
